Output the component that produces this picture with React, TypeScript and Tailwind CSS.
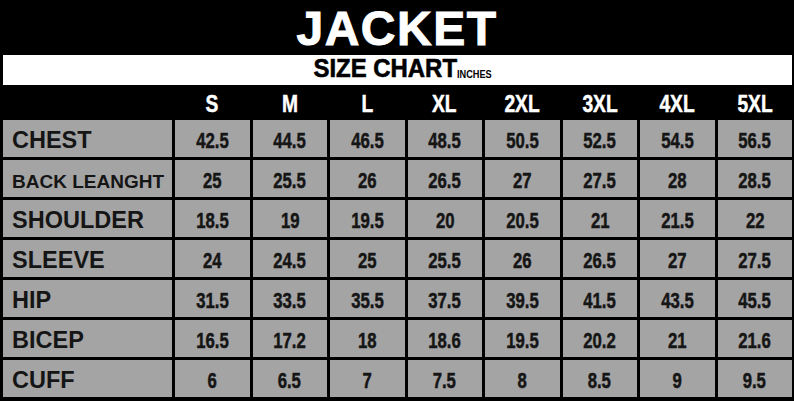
const sizes = ["S", "M", "L", "XL", "2XL", "3XL", "4XL", "5XL"];

const rows: { label: string; small?: boolean; values: string[] }[] = [
  { label: "CHEST", values: ["42.5", "44.5", "46.5", "48.5", "50.5", "52.5", "54.5", "56.5"] },
  { label: "BACK LEANGHT", small: true, values: ["25", "25.5", "26", "26.5", "27", "27.5", "28", "28.5"] },
  { label: "SHOULDER", values: ["18.5", "19", "19.5", "20", "20.5", "21", "21.5", "22"] },
  { label: "SLEEVE", values: ["24", "24.5", "25", "25.5", "26", "26.5", "27", "27.5"] },
  { label: "HIP", values: ["31.5", "33.5", "35.5", "37.5", "39.5", "41.5", "43.5", "45.5"] },
  { label: "BICEP", values: ["16.5", "17.2", "18", "18.6", "19.5", "20.2", "21", "21.6"] },
  { label: "CUFF", values: ["6", "6.5", "7", "7.5", "8", "8.5", "9", "9.5"] },
];

export default function App() {
  return (
    <div className="w-[794px] h-[401px] bg-black overflow-hidden font-['Liberation_Sans',Arial,sans-serif]">
      {/* title */}
      <div className="h-[55px] flex items-start justify-center">
        <h1 className="text-white font-bold text-[48px] leading-none tracking-[1.5px] pt-[5px] [-webkit-text-stroke:1px_white]">
          JACKET
        </h1>
      </div>

      {/* size chart band */}
      <div className="ml-[3px] mr-[2px] h-[30px] bg-white flex items-end justify-center pb-[4px]">
        <span className="inline-block text-black font-bold text-[26px] leading-none scale-x-[0.92] origin-right [-webkit-text-stroke:0.6px_black]">
          SIZE CHART
        </span>
        <span className="inline-block text-black font-bold text-[10px] leading-none mb-[1px] scale-x-[0.92] origin-left">
          INCHES
        </span>
      </div>

      {/* header row */}
      <div className="h-[35px] pl-[3px] pr-[2px] grid grid-cols-[169px_repeat(8,1fr)] gap-x-[3px] items-center">
        <div />
        {sizes.map((s) => (
          <div key={s} className="text-center pt-[5px]">
            <span className="inline-block text-white font-bold text-[24px] leading-none scale-x-[0.8] [-webkit-text-stroke:0.5px_white]">
              {s}
            </span>
          </div>
        ))}
      </div>

      {/* table */}
      <div className="pl-[3px] pr-[2px] grid grid-cols-[169px_repeat(8,1fr)] gap-[3px]">
        {rows.map((r) => (
          <div key={r.label} className="contents">
            <div
              className={`h-[37px] bg-[#a4a4a4] flex items-center pl-[9px] pt-[5px] text-[#151515] font-bold leading-none ${
                r.small ? "text-[19px]" : "text-[23.5px]"
              }`}
            >
              {r.label}
            </div>
            {r.values.map((v, i) => (
              <div key={i} className="h-[37px] bg-[#a4a4a4] flex items-center justify-center pt-[5px]">
                <span className="inline-block text-[#151515] font-bold text-[22px] leading-none scale-x-[0.76] [-webkit-text-stroke:0.5px_#151515]">
                  {v}
                </span>
              </div>
            ))}
          </div>
        ))}
      </div>
    </div>
  );
}
